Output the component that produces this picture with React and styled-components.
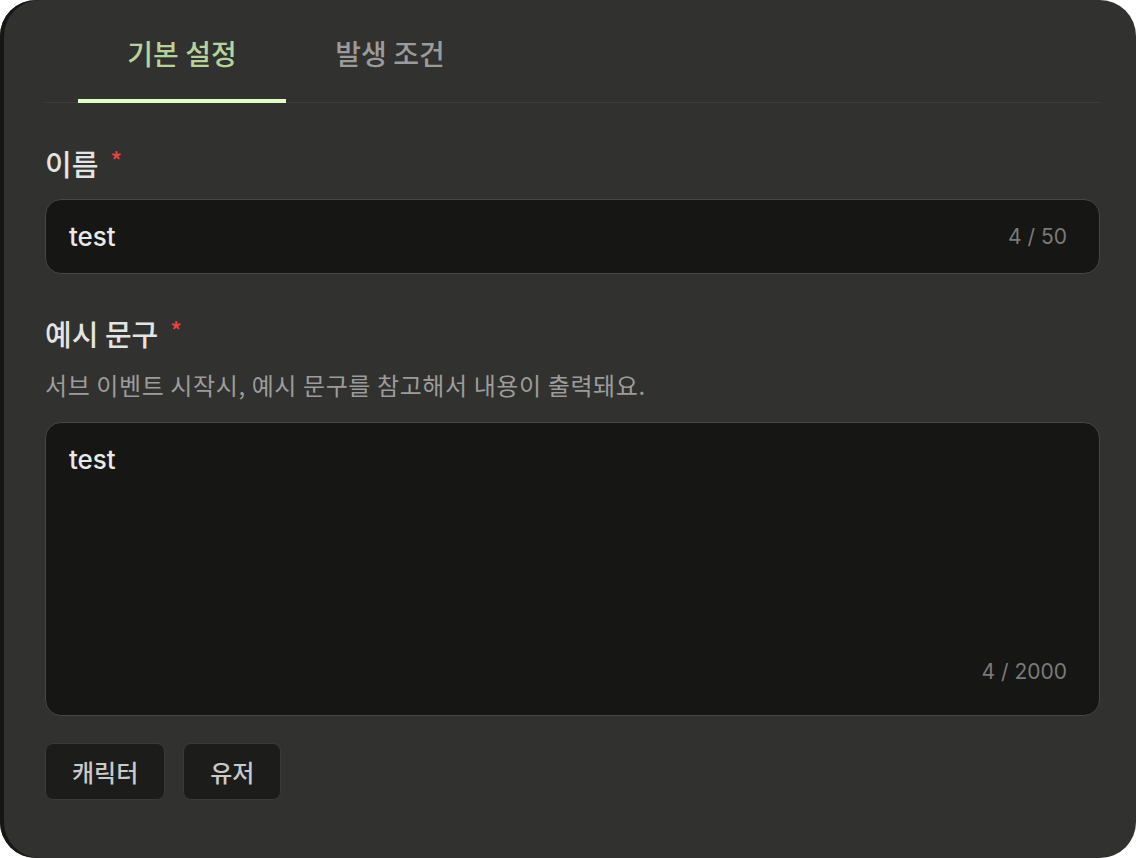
import React from 'react'
import styled, { createGlobalStyle } from 'styled-components'

const GlobalStyle = createGlobalStyle`
  html, body {
    margin: 0;
    padding: 0;
    background: #ffffff;
  }
  body {
    font-family: "Noto Sans CJK KR", "Noto Sans", sans-serif;
  }
`

function Field({ label, required, hint, children }) {
  return (
    <FieldWrap>
      <Label>
        {label}
        {required && <Star>*</Star>}
      </Label>
      {hint && <Hint>{hint}</Hint>}
      {children}
    </FieldWrap>
  )
}

function App() {
  return (
    <>
      <GlobalStyle />
      <Panel>
        <Tabs>
          <Tab active>기본 설정</Tab>
          <Tab>발생 조건</Tab>
        </Tabs>

        <Body>
          <Field label="이름" required>
            <InputBox>
              <Value>test</Value>
              <Counter>4 / 50</Counter>
            </InputBox>
          </Field>

          <Field
            label="예시 문구"
            required
            hint="서브 이벤트 시작시, 예시 문구를 참고해서 내용이 출력돼요."
          >
            <TextBox>
              <Value>test</Value>
              <Counter>4 / 2000</Counter>
            </TextBox>
          </Field>

          <Chips>
            <Chip>캐릭터</Chip>
            <Chip>유저</Chip>
          </Chips>
        </Body>
      </Panel>
    </>
  )
}

export default App

const Panel = styled.div`
  width: 1136px;
  height: 858px;
  box-sizing: border-box;
  background: #313130;
  border-radius: 36px;
  box-shadow: inset 4px 0 0 #161616;
  padding: 0 36px 0 45px;
  display: flex;
  flex-direction: column;
  overflow: hidden;
`

const Tabs = styled.div`
  display: flex;
  padding-left: 33px;
  border-bottom: 1px solid #3c3c3b;
`

const Tab = styled.div`
  width: 208px;
  height: 103px;
  box-sizing: border-box;
  display: flex;
  align-items: center;
  justify-content: center;
  padding-top: 7px;
  font-size: 28px;
  font-weight: 500;
  color: ${p => (p.active ? '#b5d39b' : '#9b9b9a')};
  border-bottom: 4px solid ${p => (p.active ? '#e2fcc6' : 'transparent')};
  margin-bottom: -1px;
`

const Body = styled.div`
  display: flex;
  flex-direction: column;
  padding-top: 42px;
  gap: 41px;
`

const FieldWrap = styled.div`
  display: flex;
  flex-direction: column;
`

const Label = styled.div`
  font-size: 29px;
  font-weight: 500;
  color: #e4e4e3;
  line-height: 36px;
  height: 36px;
  margin-bottom: 18px;
  display: flex;
  gap: 12px;
`

const Star = styled.span`
  color: #e5443f;
  font-size: 24px;
  line-height: 30px;
`

const Hint = styled.div`
  font-size: 24px;
  letter-spacing: 0.6px;
  color: #9c9c9b;
  line-height: 32px;
  margin-bottom: 21px;
`

const InputBox = styled.div`
  height: 75px;
  box-sizing: border-box;
  background: #161615;
  border: 1.5px solid #474746;
  border-radius: 16px;
  padding: 0 32px 0 23px;
  display: flex;
  align-items: center;
  justify-content: space-between;
`

const TextBox = styled.div`
  height: 294px;
  box-sizing: border-box;
  background: #161615;
  border: 1.5px solid #474746;
  border-radius: 16px;
  padding: 21px 32px 31px 23px;
  display: flex;
  flex-direction: column;
  justify-content: space-between;
`

const Value = styled.div`
  font-family: "Inter", "Noto Sans CJK KR", sans-serif;
  font-size: 26px;
  font-weight: 500;
  color: #e9e9e8;
`

const Counter = styled.div`
  font-family: "Inter", sans-serif;
  font-size: 21px;
  color: #7a7a79;
  ${TextBox} & {
    align-self: flex-end;
  }
  ${InputBox} & {
    align-self: center;
  }
`

const Chips = styled.div`
  display: flex;
  gap: 18px;
  margin-top: -14px;
`

const Chip = styled.div`
  height: 57px;
  box-sizing: border-box;
  padding: 0 26px;
  display: flex;
  align-items: center;
  background: #1c1c1b;
  border: 1.5px solid #3a3a39;
  border-radius: 8px;
  font-size: 24px;
  font-weight: 500;
  color: #c9c9c8;
`
